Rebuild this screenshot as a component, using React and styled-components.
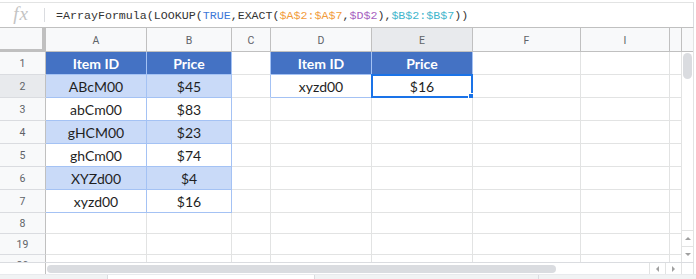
import styled, { createGlobalStyle } from "styled-components";

const GlobalStyle = createGlobalStyle`
  html, body { margin: 0; padding: 0; background: #fff; overflow: hidden; }
  #root { width: 696px; height: 279px; }
`;

const BLUE = "#4472c4";
const LIGHT = "#c9daf8";
const TABLE_LINE = "#a4c2f4";
const GRID = "#e2e3e3";
const HEAD_LINE = "#c0c0c0";

const COLS = [
  { key: "A", w: 101 },
  { key: "B", w: 85 },
  { key: "C", w: 39 },
  { key: "D", w: 101 },
  { key: "E", w: 101 },
  { key: "F", w: 108 },
  { key: "I", w: 89 },
  { key: "", w: 12 },
];

// each row: label, height, cells keyed by column
const ROWS = [
  { n: "1", h: 23, cells: { A: "Item ID", B: "Price", D: "Item ID", E: "Price" }, head: true },
  { n: "2", h: 23, cells: { A: "ABcM00", B: "$45", D: "xyzd00", E: "$16" }, band: true },
  { n: "3", h: 23, cells: { A: "abCm00", B: "$83" } },
  { n: "4", h: 23, cells: { A: "gHCM00", B: "$23" }, band: true },
  { n: "5", h: 23, cells: { A: "ghCm00", B: "$74" } },
  { n: "6", h: 23, cells: { A: "XYZd00", B: "$4" }, band: true },
  { n: "7", h: 23, cells: { A: "xyzd00", B: "$16" } },
  { n: "8", h: 21, cells: {} },
  { n: "19", h: 21, cells: {} },
  { n: "20", h: 21, cells: {} },
];

function cellLook(row, idx, key) {
  const inLeft = idx < 7 && (key === "A" || key === "B");
  const inRight = idx < 2 && (key === "D" || key === "E");
  const look = { edge: GRID, under: GRID, bg: "#fff", head: false };
  if (inLeft || inRight) {
    look.edge = TABLE_LINE;
    look.under = TABLE_LINE;
    if (row.head) {
      look.bg = BLUE;
      look.head = true;
    } else if (row.band && inLeft) {
      look.bg = LIGHT;
    }
  }
  if (key === "C" && idx < 2) look.edge = TABLE_LINE;
  return look;
}

function FxIcon() {
  return <Fx>fx</Fx>;
}

export default function App() {
  return (
    <>
      <GlobalStyle />
      <Page>
        <FormulaBar>
          <FxBox>
            <FxIcon />
          </FxBox>
          <Divider />
          <Formula>
            <Plain>=ArrayFormula(LOOKUP(</Plain>
            <Tok $c="#3d78d8">TRUE</Tok>
            <Plain>,EXACT(</Plain>
            <Tok $c="#f29b3a">$A$2:$A$7</Tok>
            <Plain>,</Plain>
            <Tok $c="#a65fbf">$D$2</Tok>
            <Plain>),</Plain>
            <Tok $c="#42b6cc">$B$2:$B$7</Tok>
            <Plain>))</Plain>
          </Formula>
        </FormulaBar>

        <Main>
          <Sheet>
            <HeaderRow>
              <Corner />
              {COLS.map((c) => (
                <ColHead key={c.key + c.w} $w={c.w} $active={c.key === "E"}>
                  {c.key}
                </ColHead>
              ))}
            </HeaderRow>
            {ROWS.map((row, idx) => (
              <Row key={row.n} $h={row.h}>
                <RowHead $active={row.n === "2"}>{row.n}</RowHead>
                {COLS.map((c) => {
                  const look = cellLook(row, idx, c.key);
                  const selected = row.n === "2" && c.key === "E";
                  return (
                    <Cell
                      key={c.key + c.w}
                      $w={c.w}
                      $bg={look.bg}
                      $edge={look.edge}
                      $under={look.under}
                      $head={look.head}
                    >
                      {row.cells[c.key]}
                      {selected && (
                        <Selection>
                          <Handle />
                        </Selection>
                      )}
                    </Cell>
                  );
                })}
              </Row>
            ))}
          </Sheet>

          <VScroll>
            <VScrollHead />
            <VThumb />
            <VArrows>
              <ArrowBtn>
                <Tri $dir="up" />
              </ArrowBtn>
              <ArrowBtn>
                <Tri $dir="down" />
              </ArrowBtn>
            </VArrows>
          </VScroll>
        </Main>

        <HScroll>
          <HScrollGutter />
          <HTrack>
            <HThumb />
          </HTrack>
          <HArrow>
            <Tri $dir="left" />
          </HArrow>
          <HArrow>
            <Tri $dir="right" />
          </HArrow>
          <HCorner />
        </HScroll>
        <TabStrip>
          <TabGap $w={107} />
          <Tab />
          <TabGap $w={223} />
          <TabRest />
        </TabStrip>
      </Page>
    </>
  );
}

const Page = styled.div`
  width: 696px;
  height: 279px;
  padding-top: 2px;
  box-sizing: border-box;
  overflow: hidden;
  display: flex;
  flex-direction: column;
`;

const FormulaBar = styled.div`
  box-sizing: border-box;
  width: 694px;
  height: 26px;
  flex: none;
  display: flex;
  align-items: center;
  border-top: 1px solid ${GRID};
  border-right: 1px solid #dadce0;
  border-bottom: 1px solid ${HEAD_LINE};
`;

const FxBox = styled.div`
  width: 44px;
  display: flex;
  justify-content: center;
  padding-right: 2px;
  box-sizing: border-box;
`;

const Fx = styled.span`
  font: italic 19px "Liberation Serif", serif;
  color: #c4c4c4;
  letter-spacing: 1px;
  margin-top: -3px;
`;

const Divider = styled.div`
  width: 1px;
  height: 14px;
  background: #dadce0;
  margin-right: 11px;
`;

const Formula = styled.div`
  font: 11.65px "Liberation Mono", monospace;
  color: #222;
  white-space: pre;
  margin-top: 0px;
`;

const Plain = styled.span`
  color: #333;
`;

const Tok = styled.span`
  color: ${(p) => p.$c};
`;

const Main = styled.div`
  display: flex;
  height: 234px;
  flex: none;
  overflow: hidden;
`;

const Sheet = styled.div`
  width: 682px;
  display: flex;
  flex-direction: column;
`;

const HeaderRow = styled.div`
  display: flex;
  height: 24px;
  flex: none;
`;

const Corner = styled.div`
  box-sizing: border-box;
  width: 46px;
  flex: none;
  background: #f8f9fa;
  border-right: 4px solid ${HEAD_LINE};
  border-bottom: 3px solid ${HEAD_LINE};
`;

const ColHead = styled.div`
  box-sizing: border-box;
  width: ${(p) => p.$w}px;
  flex: none;
  display: flex;
  align-items: center;
  justify-content: center;
  background: ${(p) => (p.$active ? "#e8eaed" : "#f8f9fa")};
  border-right: 1px solid ${HEAD_LINE};
  border-bottom: 1px solid ${HEAD_LINE};
  font: 10.5px Roboto, "Liberation Sans", sans-serif;
  color: #5f6368;
  padding-top: 1px;
`;

const Row = styled.div`
  display: flex;
  height: ${(p) => p.$h}px;
  flex: none;
`;

const RowHead = styled.div`
  box-sizing: border-box;
  width: 46px;
  flex: none;
  display: flex;
  align-items: center;
  justify-content: center;
  background: ${(p) => (p.$active ? "#e8eaed" : "#f8f9fa")};
  border-right: 1px solid ${HEAD_LINE};
  border-bottom: 1px solid #dadce0;
  font: 10.5px Roboto, "Liberation Sans", sans-serif;
  color: #5f6368;
`;

const Cell = styled.div`
  box-sizing: border-box;
  position: relative;
  width: ${(p) => p.$w}px;
  flex: none;
  display: flex;
  align-items: center;
  justify-content: center;
  background: ${(p) => p.$bg};
  border-right: 1px solid ${(p) => p.$edge};
  border-bottom: 1px solid ${(p) => p.$under};
  font: ${(p) => (p.$head ? 700 : 400)} 14px Lato, "Open Sans", sans-serif;
  color: ${(p) => (p.$head ? "#fff" : "#1f1f1f")};
`;

const Selection = styled.div`
  position: absolute;
  top: -1px;
  left: -1px;
  right: -1px;
  bottom: -1px;
  border: 2px solid #1a73e8;
  pointer-events: none;
`;

const Handle = styled.div`
  position: absolute;
  right: -5px;
  bottom: -5px;
  width: 6px;
  height: 6px;
  background: #1a73e8;
  border: 1px solid #fff;
`;

const VScroll = styled.div`
  box-sizing: border-box;
  width: 12px;
  flex: none;
  display: flex;
  flex-direction: column;
  align-items: center;
  border-right: 1px solid ${GRID};
`;

const VScrollHead = styled.div`
  box-sizing: border-box;
  width: 100%;
  height: 24px;
  flex: none;
  background: #f8f9fa;
  border-bottom: 1px solid ${HEAD_LINE};
`;

const VThumb = styled.div`
  width: 9px;
  height: 26px;
  margin-top: 1px;
  border-radius: 5px;
  background: #dadce0;
`;

const VArrows = styled.div`
  margin-top: auto;
  width: 100%;
  display: flex;
  flex-direction: column;
`;

const ArrowBtn = styled.div`
  box-sizing: border-box;
  height: 16px;
  display: flex;
  align-items: center;
  justify-content: center;
  border-top: 1px solid ${GRID};
`;

const Tri = styled.div`
  width: 0;
  height: 0;
  border: 3px solid transparent;
  ${(p) =>
    p.$dir === "up"
      ? "border-bottom-color: #a0a0a0; border-top-width: 0;"
      : p.$dir === "down"
      ? "border-top-color: #a0a0a0; border-bottom-width: 0;"
      : p.$dir === "left"
      ? "border-right-color: #a0a0a0; border-left-width: 0;"
      : "border-left-color: #a0a0a0; border-right-width: 0;"}
`;

const HScroll = styled.div`
  box-sizing: border-box;
  display: flex;
  height: 12px;
  flex: none;
  width: 694px;
  border-top: 1px solid #dadce0;
`;

const HScrollGutter = styled.div`
  box-sizing: border-box;
  width: 46px;
  flex: none;
  border-right: 1px solid ${HEAD_LINE};
`;

const HTrack = styled.div`
  flex: 1;
  display: flex;
  align-items: center;
  padding-left: 1px;
`;

const HThumb = styled.div`
  width: 509px;
  height: 8px;
  border-radius: 4px;
  background: #dadce0;
`;

const HArrow = styled.div`
  box-sizing: border-box;
  width: 16px;
  flex: none;
  display: flex;
  align-items: center;
  justify-content: center;
  border-left: 1px solid ${GRID};
`;

const HCorner = styled.div`
  box-sizing: border-box;
  width: 13px;
  flex: none;
  border-left: 1px solid ${GRID};
  border-right: 1px solid ${GRID};
`;

const TabStrip = styled.div`
  display: flex;
  flex: 1;
  background: #f1f3f4;
  border-top: 1px solid #e8eaed;
`;

const TabGap = styled.div`
  width: ${(p) => p.$w}px;
  flex: none;
`;

const Tab = styled.div`
  width: 206px;
  flex: none;
  background: #fff;
  border-left: 1px solid #dadce0;
  border-right: 1px solid #dadce0;
`;

const TabRest = styled.div`
  flex: 1;
  border-left: 1px solid #dadce0;
`;
